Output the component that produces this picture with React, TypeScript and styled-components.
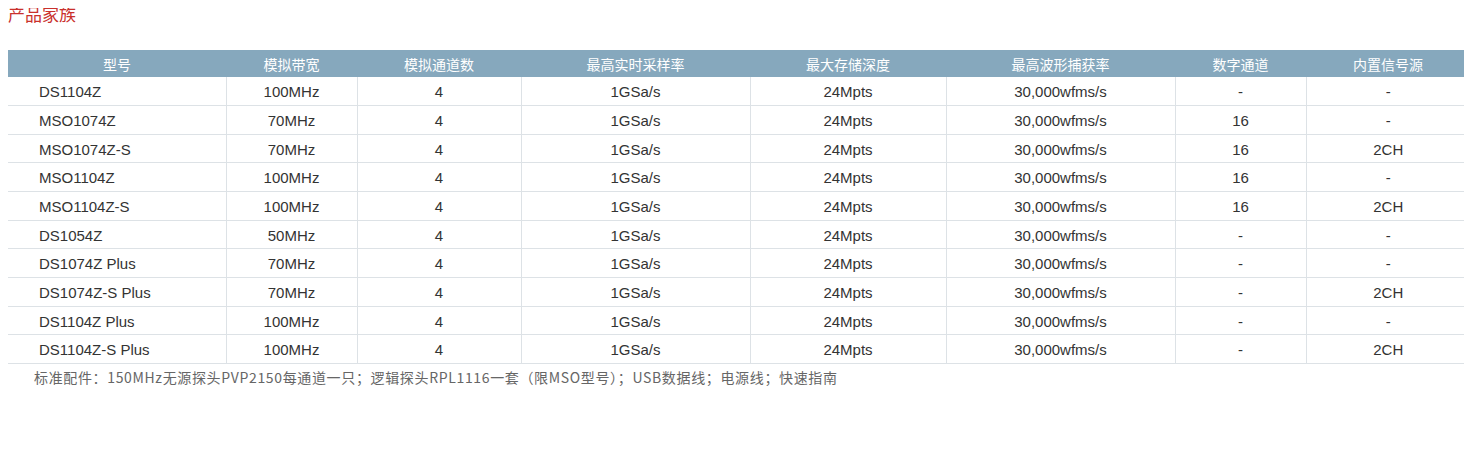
import React from 'react';
import styled, { createGlobalStyle } from 'styled-components';

const GlobalStyle = createGlobalStyle`
  body {
    margin: 8px;
    background: #fff;
    font-family: "Liberation Sans", Arial, "Noto Sans CJK SC", sans-serif;
  }
`;

const Title = styled.h2`
  margin: 0;
  height: 42px;
  font-family: "Noto Sans CJK SC", sans-serif;
  font-size: 17px;
  font-weight: normal;
  line-height: 11px;
  color: #c9302c;
`;

const Table = styled.table`
  width: 1462px;
  border-collapse: collapse;
  table-layout: fixed;
  font-size: 15px;
  color: #333;
`;

const HeadCell = styled.th`
  height: 27px;
  padding: 0;
  background: #86a8bd;
  color: #fff;
  font-family: "Noto Sans CJK SC", sans-serif;
  font-size: 14px;
  font-weight: normal;
  text-align: center;
  vertical-align: middle;
`;

const Row = styled.tr`
  height: 28.67px;
  border-bottom: 1px solid #dde2e6;
`;

const Cell = styled.td<{ $first?: boolean }>`
  padding: 2px 0 0 ${(p) => (p.$first ? '31px' : '0')};
  text-align: ${(p) => (p.$first ? 'left' : 'center')};
  vertical-align: middle;
  border-left: ${(p) => (p.$first ? 'none' : '1px solid #dde2e6')};
  line-height: 16px;
`;

const Note = styled.p`
  margin: 4px 0 0 26px;
  font-family: "Noto Sans CJK SC", sans-serif;
  font-size: 14px;
  letter-spacing: 0.65px;
  line-height: 18px;
  color: #666;
`;

const widths = [218, 131, 164, 229, 196, 229, 131, 164];
const headers = ['型号', '模拟带宽', '模拟通道数', '最高实时采样率', '最大存储深度', '最高波形捕获率', '数字通道', '内置信号源'];

const rows: string[][] = [
  ['DS1104Z', '100MHz', '-', '-'],
  ['MSO1074Z', '70MHz', '16', '-'],
  ['MSO1074Z-S', '70MHz', '16', '2CH'],
  ['MSO1104Z', '100MHz', '16', '-'],
  ['MSO1104Z-S', '100MHz', '16', '2CH'],
  ['DS1054Z', '50MHz', '-', '-'],
  ['DS1074Z Plus', '70MHz', '-', '-'],
  ['DS1074Z-S Plus', '70MHz', '-', '2CH'],
  ['DS1104Z Plus', '100MHz', '-', '-'],
  ['DS1104Z-S Plus', '100MHz', '-', '2CH'],
];

const App = () => {
  return (
    <>
      <GlobalStyle />
      <Title>产品家族</Title>
      <Table>
        <colgroup>
          {widths.map((w, i) => (
            <col key={i} style={{ width: w }} />
          ))}
        </colgroup>
        <thead>
          <tr>
            {headers.map((h) => (
              <HeadCell key={h}>{h}</HeadCell>
            ))}
          </tr>
        </thead>
        <tbody>
          {rows.map(([model, bw, digital, gen]) => (
            <Row key={model}>
              <Cell $first>{model}</Cell>
              <Cell>{bw}</Cell>
              <Cell>4</Cell>
              <Cell>1GSa/s</Cell>
              <Cell>24Mpts</Cell>
              <Cell>30,000wfms/s</Cell>
              <Cell>{digital}</Cell>
              <Cell>{gen}</Cell>
            </Row>
          ))}
        </tbody>
      </Table>
      <Note>
        标准配件：150MHz无源探头PVP2150每通道一只；逻辑探头RPL1116一套（限MSO型号）；USB数据线；电源线；快速指南
      </Note>
    </>
  );
};

export default App;
